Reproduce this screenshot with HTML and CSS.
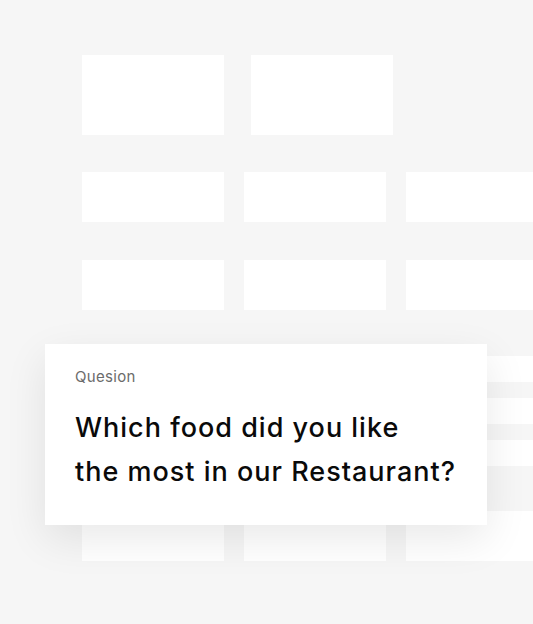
FILE: index.html
```html
<!DOCTYPE html>
<html lang="en">
<head>
<meta charset="utf-8">
<title>Question</title>
<link rel="stylesheet" href="styles.css">
</head>
<body>
<div class="page">
  <div class="grid">
    <div class="row row-top">
      <div class="tile"></div>
      <div class="tile"></div>
    </div>
    <div class="row row-mid">
      <div class="tile"></div>
      <div class="tile"></div>
      <div class="tile"></div>
    </div>
    <div class="row row-mid row-third">
      <div class="tile"></div>
      <div class="tile"></div>
      <div class="tile"></div>
    </div>
    <div class="row row-thin row-first-thin">
      <div class="tile"></div>
      <div class="tile"></div>
      <div class="tile"></div>
    </div>
    <div class="row row-thin">
      <div class="tile"></div>
      <div class="tile"></div>
      <div class="tile"></div>
    </div>
    <div class="row row-thin">
      <div class="tile"></div>
      <div class="tile"></div>
      <div class="tile"></div>
    </div>
    <div class="row row-mid row-last">
      <div class="tile"></div>
      <div class="tile"></div>
      <div class="tile"></div>
    </div>
  </div>
  <div class="card">
    <div class="card-label">Quesion</div>
    <div class="card-title">Which food did you like<br>the most in our Restaurant?</div>
  </div>
</div>
</body>
</html>
```

FILE: styles.css
```css
* { box-sizing: border-box; }
html, body {
  margin: 0;
  padding: 0;
  background: #f6f6f6;
  overflow: hidden;
}
.page {
  position: relative;
  width: 533px;
  height: 624px;
  overflow: hidden;
  font-family: "Inter", "Lato", sans-serif;
}
.grid {
  display: flex;
  flex-direction: column;
  padding: 55px 0 0 82px;
}
.row {
  display: flex;
  gap: 20px;
  flex-shrink: 0;
}
.tile {
  width: 142px;
  flex-shrink: 0;
  background: #ffffff;
}
.row-top {
  gap: 27px;
  height: 80px;
  margin-bottom: 37px;
}
.row-mid { height: 50px; }
.row-third { margin-top: 38px; }
.row-thin { height: 26px; margin-top: 16px; }
.row-first-thin { margin-top: 46px; }
.row-last { margin-top: 45px; }
.card {
  position: absolute;
  left: 45px;
  top: 344px;
  width: 442px;
  height: 181px;
  background: #ffffff;
  padding: 23px 30px 0 30px;
  box-shadow: 0 14px 40px rgba(0, 0, 0, 0.09);
}
.card-label {
  font-size: 15px;
  line-height: 20px;
  letter-spacing: 0.3px;
  color: #6b6b6b;
}
.card-title {
  margin-top: 19px;
  font-size: 27px;
  line-height: 44px;
  font-weight: 500;
  letter-spacing: 1px;
  color: #0a0a0a;
}
```
